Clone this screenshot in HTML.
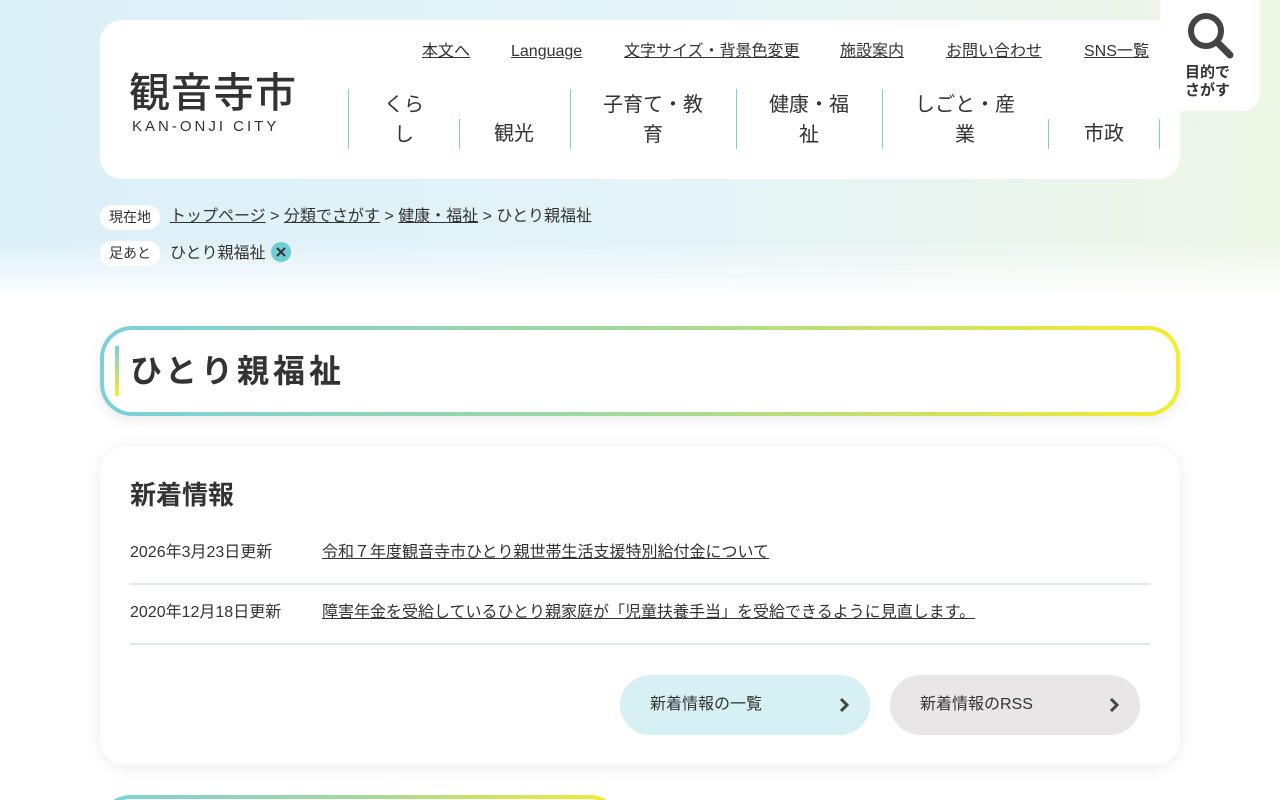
<!DOCTYPE html>
<html><head><meta charset="utf-8"><style>
*{margin:0;padding:0;box-sizing:border-box}
html{width:1280px;height:800px;overflow:hidden}
body{width:1280px;height:800px;overflow:hidden;position:relative;font-family:"Liberation Sans","Noto Sans CJK JP",sans-serif;color:#333;background:#fff}
.bg{position:absolute;left:0;top:0;width:1280px;height:300px;background:linear-gradient(90deg,#dcf0f8 0%,#e3f3f8 50%,#eef6e6 100%)}
.bg:after{content:"";position:absolute;left:0;right:0;bottom:0;height:60px;background:linear-gradient(180deg,rgba(255,255,255,0),#fff)}
.hdr{position:absolute;left:100px;top:20px;width:1080px;height:159px;background:#fff;border-radius:22px}
.logo{position:absolute;left:129px;top:68px;font-size:41px;line-height:50px;letter-spacing:1px;color:#333;font-weight:500}
.logo2{position:absolute;left:132px;top:118px;font-size:15px;line-height:18px;letter-spacing:3px;color:#333}
.top a{position:absolute;top:42px;font-size:16px;line-height:20px;display:block;color:#333;text-decoration:underline}
.nav div{position:absolute;font-size:20px;color:#333;text-align:center;line-height:30px}
.sep{position:absolute;width:1px;background:#7dcfd6}
.srch{position:absolute;left:1160px;top:0;width:100px;height:111px;background:#fff;border-radius:0 0 18px 18px}
.bc{position:absolute;font-size:16px;line-height:20px;color:#333}
.bc a{color:#333;text-decoration:underline}
.pill{position:absolute;left:100px;width:60px;height:25px;background:#fff;border-radius:12px;font-size:14px;line-height:25px;text-align:center}
.h1{position:absolute;left:100px;top:326px;width:1080px;height:90px;border-radius:32px;padding:4px;background:linear-gradient(90deg,#7bd0da,#a3d99a 50%,#f5ec2e);box-shadow:0 4px 14px rgba(0,0,0,.08)}
.h1 .in{width:100%;height:100%;background:#fff;border-radius:28px}
.bar{position:absolute;left:115px;top:346px;width:4px;height:50px;background:linear-gradient(180deg,#7bd0da,#f5ec2e)}
.h1t{position:absolute;left:130px;top:349px;font-size:32px;line-height:44px;font-weight:bold;letter-spacing:4px;color:#333}
.card{position:absolute;left:100px;top:446px;width:1080px;height:319px;background:#fff;border-radius:26px;box-shadow:0 2px 16px rgba(0,0,0,.08)}
.row{position:absolute;left:130px;width:1020px;height:60px;border-bottom:2px solid #dde8ef;font-size:16px;line-height:20px}
.row span{position:absolute;top:18px}
.row a{position:absolute;left:192px;top:18px;color:#333;text-decoration:underline}
.btn{position:absolute;top:675px;width:250px;height:60px;border-radius:30px;font-size:16px;line-height:60px;padding-left:30px}
.btn svg{position:absolute;right:20px;top:22px}
</style></head><body>
<div class="bg"></div>
<div class="hdr"></div>
<div class="logo">観音寺市</div>
<div class="logo2">KAN-ONJI CITY</div>
<div class="top">
<a style="left:422px">本文へ</a><a style="left:511px">Language</a><a style="left:624px">文字サイズ・背景色変更</a><a style="left:840px">施設案内</a><a style="left:946px">お問い合わせ</a><a style="left:1084px">SNS一覧</a>
</div>
<div class="sep" style="left:348px;top:89px;height:60px"></div>
<div class="sep" style="left:459px;top:119px;height:30px"></div>
<div class="sep" style="left:570px;top:89px;height:60px"></div>
<div class="sep" style="left:736px;top:89px;height:60px"></div>
<div class="sep" style="left:882px;top:89px;height:60px"></div>
<div class="sep" style="left:1048px;top:119px;height:30px"></div>
<div class="sep" style="left:1159px;top:119px;height:30px"></div>
<div class="nav">
<div style="left:384px;top:90px;width:40px">くら<br>し</div>
<div style="left:494px;top:119px">観光</div>
<div style="left:600px;top:90px;width:106px">子育て・教<br>育</div>
<div style="left:766px;top:90px;width:86px">健康・福<br>祉</div>
<div style="left:912px;top:90px;width:106px">しごと・産<br>業</div>
<div style="left:1084px;top:119px">市政</div>
</div>
<div class="srch">
<svg style="position:absolute;left:26px;top:11px" width="48" height="48" viewBox="0 0 48 48"><circle cx="20" cy="20" r="15" fill="none" stroke="#444" stroke-width="6"/><line x1="31" y1="31" x2="44" y2="44" stroke="#444" stroke-width="7" stroke-linecap="round"/></svg>
<div style="position:absolute;left:25px;top:64px;font-size:15px;font-weight:bold;line-height:18px;color:#333">目的で<br>さがす</div>
</div>
<div class="pill" style="top:205px">現在地</div>
<div class="bc" style="left:170px;top:207px"><a>トップページ</a> &gt; <a>分類でさがす</a> &gt; <a>健康・福祉</a> &gt; ひとり親福祉</div>
<div class="pill" style="top:241px">足あと</div>
<div class="bc" style="left:170px;top:244px">ひとり親福祉</div>
<svg style="position:absolute;left:271px;top:242px" width="20" height="20" viewBox="0 0 20 20"><circle cx="10" cy="10" r="10" fill="#6fcdd3"/><path d="M6 6L14 14M14 6L6 14" stroke="#333" stroke-width="2"/></svg>
<div class="h1"><div class="in"></div></div>
<div class="bar"></div>
<div class="h1t">ひとり親福祉</div>
<div class="card"></div>
<div style="position:absolute;left:130px;top:476px;font-size:26px;line-height:38px;font-weight:bold">新着情報</div>
<div class="row" style="top:525px"><span>2026年3月23日更新</span><a>令和７年度観音寺市ひとり親世帯生活支援特別給付金について</a></div>
<div class="row" style="top:585px"><span>2020年12月18日更新</span><a>障害年金を受給しているひとり親家庭が「児童扶養手当」を受給できるように見直します。</a></div>
<div class="btn" style="left:620px;background:#d6f0f4">新着情報の一覧<svg width="12" height="16" viewBox="0 0 12 16"><path d="M3 2L9 8L3 14" fill="none" stroke="#444" stroke-width="3"/></svg></div>
<div class="btn" style="left:890px;background:#e8e6e7">新着情報のRSS<svg width="12" height="16" viewBox="0 0 12 16"><path d="M3 2L9 8L3 14" fill="none" stroke="#444" stroke-width="3"/></svg></div>
<div style="position:absolute;left:100px;top:795px;width:520px;height:5px;overflow:hidden"><div style="width:520px;height:60px;border-radius:30px;padding:4px;background:linear-gradient(90deg,#7bd0da,#a3d99a 50%,#f5ec2e)"><div style="width:100%;height:100%;background:#fff;border-radius:26px"></div></div></div>
</body></html>
